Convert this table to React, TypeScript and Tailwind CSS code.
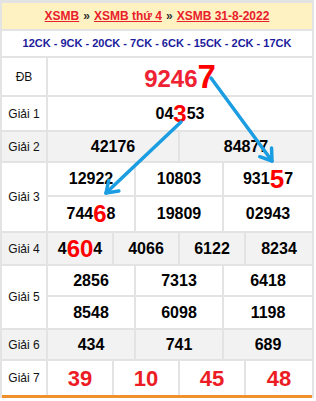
import React from "react";

const border = "border-[#e3e3e3]";

const Label: React.FC<{ text: string; className?: string }> = ({ text, className }) => (
  <div
    className={`w-[46px] shrink-0 flex items-center justify-center border-r-2 ${border} text-[12px] text-[#111] ${className ?? ""}`}
  >
    {text}
  </div>
);

const Num: React.FC<{ children: React.ReactNode; last?: boolean }> = ({ children, last }) => (
  <div
    className={`flex items-center justify-center font-bold text-[16px] text-black ${last ? "" : `border-r-2 ${border}`}`}
  >
    {children}
  </div>
);

const Red: React.FC<{ children: React.ReactNode; big?: boolean }> = ({ children, big }) => (
  <span className={`text-[#ff0000] leading-none ${big ? "text-[26px]" : "text-[24px]"}`}>{children}</span>
);

function Arrow({ x1, y1, x2, y2 }: { x1: number; y1: number; x2: number; y2: number }) {
  const a = Math.atan2(y2 - y1, x2 - x1);
  const len = 13;
  const spread = 0.6;
  const p1 = [x2 - len * Math.cos(a - spread), y2 - len * Math.sin(a - spread)];
  const p2 = [x2 - len * Math.cos(a + spread), y2 - len * Math.sin(a + spread)];
  return (
    <g stroke="#1b9de2" strokeWidth={3.5} strokeLinecap="round" fill="none">
      <line x1={x1} y1={y1} x2={x2} y2={y2} />
      <polyline points={`${p1[0]},${p1[1]} ${x2},${y2} ${p2[0]},${p2[1]}`} strokeLinejoin="round" />
    </g>
  );
}

export default function App() {
  return (
    <div className="relative w-[316px] h-[401px] bg-white font-['Liberation_Sans',Arial,sans-serif] overflow-hidden">
      <div className={`w-[314px] border-l-2 border-r-2 border-t-[3px] ${border} flex flex-col`}>
        {/* header */}
        <div className={`h-[28px] bg-[#fff2c2] border-b-2 ${border} flex items-center justify-center text-[12px] font-bold`}>
          <a className="text-[#e8202a] underline">XSMB</a>
          <span className="text-[#333] mx-[4px]">»</span>
          <a className="text-[#e8202a] underline">XSMB thứ 4</a>
          <span className="text-[#333] mx-[4px]">»</span>
          <a className="text-[#e8202a] underline">XSMB 31-8-2022</a>
        </div>
        {/* CK */}
        <div className={`h-[27px] border-b-2 ${border} flex items-center justify-center text-[11px] font-bold text-[#1c1c9c]`}>
          12CK - 9CK - 20CK - 7CK - 6CK - 15CK - 2CK - 17CK
        </div>
        {/* DB */}
        <div className={`h-[39px] flex border-b-2 ${border}`}>
          <Label text="ĐB" />
          <div className="flex-1 flex items-center justify-center font-bold">
            <span className="text-[#ee2233] text-[24px] leading-none mt-[4px]">9246</span>
            <span className="text-[#ff0000] text-[33px] leading-none">7</span>
          </div>
        </div>
        {/* G1 */}
        <div className={`h-[35px] flex border-b-2 ${border}`}>
          <Label text="Giải 1" />
          <div className="flex-1 flex items-center justify-center font-bold text-[16px]">
            04<Red>3</Red>53
          </div>
        </div>
        {/* G2 */}
        <div className={`h-[31px] flex border-b-2 ${border} bg-[#f2f2f2]`}>
          <Label text="Giải 2" />
          <div className="flex-1 grid grid-cols-2">
            <Num>42176</Num>
            <Num last>84877</Num>
          </div>
        </div>
        {/* G3 */}
        <div className={`h-[70px] flex border-b-2 ${border}`}>
          <Label text="Giải 3" />
          <div className="flex-1 grid grid-cols-3 grid-rows-2">
            <div className={`flex items-center justify-center font-bold text-[16px] border-r-2 border-b-2 ${border}`}>12922</div>
            <div className={`flex items-center justify-center font-bold text-[16px] border-r-2 border-b-2 ${border}`}>10803</div>
            <div className={`flex items-center justify-center font-bold text-[16px] border-b-2 ${border}`}>931<Red big>5</Red>7</div>
            <Num>744<Red>6</Red>8</Num>
            <Num>19809</Num>
            <Num last>02943</Num>
          </div>
        </div>
        {/* G4 */}
        <div className={`h-[33px] flex border-b-2 ${border} bg-[#f2f2f2]`}>
          <Label text="Giải 4" />
          <div className="flex-1 grid grid-cols-4">
            <Num>4<Red>60</Red>4</Num>
            <Num>4066</Num>
            <Num>6122</Num>
            <Num last>8234</Num>
          </div>
        </div>
        {/* G5 */}
        <div className={`h-[64px] flex border-b-2 ${border}`}>
          <Label text="Giải 5" />
          <div className="flex-1 grid grid-cols-3 grid-rows-2">
            <div className={`flex items-center justify-center font-bold text-[16px] border-r-2 border-b-2 ${border}`}>2856</div>
            <div className={`flex items-center justify-center font-bold text-[16px] border-r-2 border-b-2 ${border}`}>7313</div>
            <div className={`flex items-center justify-center font-bold text-[16px] border-b-2 ${border}`}>6418</div>
            <Num>8548</Num>
            <Num>6098</Num>
            <Num last>1198</Num>
          </div>
        </div>
        {/* G6 */}
        <div className={`h-[31px] flex border-b-2 ${border} bg-[#f2f2f2]`}>
          <Label text="Giải 6" />
          <div className="flex-1 grid grid-cols-3">
            <Num>434</Num>
            <Num>741</Num>
            <Num last>689</Num>
          </div>
        </div>
        {/* G7 */}
        <div className={`h-[37px] flex border-b-[3px] border-b-[#f0902c]`}>
          <Label text="Giải 7" />
          <div className="flex-1 grid grid-cols-4 text-[#ec1c24]">
            {["39", "10", "45", "48"].map((n, i) => (
              <div
                key={n}
                className={`flex items-center justify-center font-bold text-[22px] ${i < 3 ? `border-r-2 ${border}` : ""}`}
              >
                {n}
              </div>
            ))}
          </div>
        </div>
      </div>
      <svg className="absolute inset-0 pointer-events-none" width={316} height={401}>
        <Arrow x1={211} y1={78} x2={272} y2={161} />
        <Arrow x1={181} y1={122} x2={106} y2={193} />
      </svg>
    </div>
  );
}
